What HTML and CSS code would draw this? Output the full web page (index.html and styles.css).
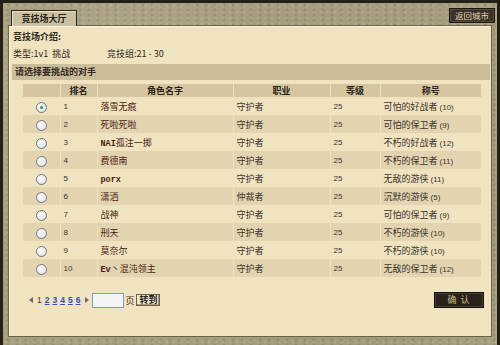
FILE: index.html
```html
<!DOCTYPE html>
<html lang="zh">
<head>
	<meta charset="utf-8">
	<title>竞技场大厅</title>
	<link rel="stylesheet" href="styles.css">
</head>
<body>
	<div class="frame">
		<div class="topbar">
			<div class="tab">竞技场大厅</div>
			<div class="back">返回城市</div>
		</div>
		<div class="panel">
			<p class="title">竞技场介绍:</p>
			<p class="info"><span class="type">类型:1v1 &nbsp;挑战</span><span>竞技组:21 - 30</span></p>
			<div class="bar">请选择要挑战的对手</div>
			<table class="list">
				<colgroup>
					<col class="c1"><col class="c2"><col class="c3"><col class="c4"><col class="c5"><col class="c6">
				</colgroup>
				<tr class="head"><th></th><th>排名</th><th>角色名字</th><th>职业</th><th>等级</th><th>称号</th></tr>
				<tr><td><span class="radio on"></span></td><td class="num">1</td><td class="name">落雪无痕</td><td>守护者</td><td class="num">25</td><td>可怕的好战者<span class="num cnt">(10)</span></td></tr>
				<tr class="alt"><td><span class="radio"></span></td><td class="num">2</td><td class="name">死啦死啦</td><td>守护者</td><td class="num">25</td><td>可怕的保卫者<span class="num cnt">(9)</span></td></tr>
				<tr><td><span class="radio"></span></td><td class="num">3</td><td class="name"><span class="mono">NAI</span>孤注一掷</td><td>守护者</td><td class="num">25</td><td>不朽的好战者<span class="num cnt">(12)</span></td></tr>
				<tr class="alt"><td><span class="radio"></span></td><td class="num">4</td><td class="name">费德南</td><td>守护者</td><td class="num">25</td><td>不朽的保卫者<span class="num cnt">(11)</span></td></tr>
				<tr><td><span class="radio"></span></td><td class="num">5</td><td class="name"><span class="mono">porx</span></td><td>守护者</td><td class="num">25</td><td>无敌的游侠<span class="num cnt">(11)</span></td></tr>
				<tr class="alt"><td><span class="radio"></span></td><td class="num">6</td><td class="name">潇洒</td><td>仲裁者</td><td class="num">25</td><td>沉默的游侠<span class="num cnt">(5)</span></td></tr>
				<tr><td><span class="radio"></span></td><td class="num">7</td><td class="name">战神</td><td>守护者</td><td class="num">25</td><td>可怕的保卫者<span class="num cnt">(9)</span></td></tr>
				<tr class="alt"><td><span class="radio"></span></td><td class="num">8</td><td class="name">刑天</td><td>守护者</td><td class="num">25</td><td>不朽的游侠<span class="num cnt">(10)</span></td></tr>
				<tr><td><span class="radio"></span></td><td class="num">9</td><td class="name">莫奈尔</td><td>守护者</td><td class="num">25</td><td>不朽的游侠<span class="num cnt">(10)</span></td></tr>
				<tr class="alt"><td><span class="radio"></span></td><td class="num">10</td><td class="name"><span class="mono">Ev</span>丶混沌领主</td><td>守护者</td><td class="num">25</td><td>无敌的保卫者<span class="num cnt">(12)</span></td></tr>
			</table>
			<div class="foot">
				<div class="pager">
					<span class="arrow left"></span>
					<span class="cur">1</span>
					<a href="#">2</a><a href="#">3</a><a href="#">4</a><a href="#">5</a><a href="#">6</a>
					<span class="arrow right"></span>
					<span class="box"></span>
					<span class="page">页</span>
					<span class="go">转到</span>
				</div>
				<div class="ok">确 认</div>
			</div>
		</div>
	</div>
</body>
</html>
```

FILE: styles.css
```css
html, body {
	margin: 0;
	padding: 0;
}

body {
	width: 500px;
	height: 345px;
	overflow: hidden;
	background-color: #251f16;
	font-family: "Noto Sans CJK SC", "Liberation Sans", sans-serif;
	font-size: 9px;
	color: #2e2a22;
}

.frame {
	margin: 3px 3px 0 3px;
	height: 342px;
	box-sizing: border-box;
	padding: 0 5px 8px 5px;
	background-color: #a59d7d;
	background-image:
		radial-gradient(circle at 20% 30%, rgba(255, 255, 240, .12) 0, transparent 40%),
		radial-gradient(circle at 70% 60%, rgba(60, 50, 30, .12) 0, transparent 45%),
		radial-gradient(circle at 3px 3px, rgba(255, 255, 235, .10) 0 1px, transparent 2px),
		radial-gradient(circle at 5px 2px, rgba(50, 40, 20, .12) 0 1px, transparent 2px);
	background-size: auto, auto, 7px 6px, 9px 5px;
}

.topbar {
	height: 22px;
	display: flex;
	justify-content: space-between;
	align-items: flex-start;
}

.tab {
	margin: 6px 0 0 3px;
	width: 64px;
	height: 15px;
	line-height: 15px;
	text-align: center;
	font-weight: bold;
	color: #2a2418;
	background-color: #c9c1a2;
	border: 1px solid #2e2618;
	border-bottom: none;
	box-shadow: inset 1px 1px 0 #ece3c6;
	position: relative;
	top: 1px;
	z-index: 1;
}

.back {
	margin: 5px -3px 0 0;
	width: 44px;
	height: 13px;
	line-height: 13px;
	text-align: center;
	font-size: 8.5px;
	color: #e0d2ae;
	background-color: #3a3128;
	border: 1px solid #1c1710;
	box-shadow: inset 0 0 0 1px #57493a;
}

.panel {
	height: 312px;
	box-sizing: border-box;
	background-color: #f0e3c0;
	border: 1px solid #6f644a;
	box-shadow: inset 1px 1px 0 #fbf3da;
	padding: 5px 1px 0 4px;
}

.title {
	margin: 0;
	height: 12px;
	line-height: 12px;
	font-weight: bold;
}

.info {
	margin: 5px 0 0 0;
	height: 12px;
	line-height: 12px;
}

.type {
	display: inline-block;
	width: 94px;
}

.bar {
	margin: 4px 0 0 -1px;
	height: 16px;
	line-height: 16px;
	padding-left: 3px;
	background-color: #cbbd9a;
	font-weight: bold;
}

.list {
	margin: 4px 0 0 10px;
	width: 458px;
	border-collapse: collapse;
	table-layout: fixed;
}

.c1 { width: 37px; }
.c2 { width: 37px; }
.c3 { width: 136px; }
.c4 { width: 97px; }
.c5 { width: 50px; }
.c6 { width: 101px; }

.list th {
	height: 13px;
	padding: 0;
	background-color: #d5c6a1;
	border-left: 1px solid #eee1bd;
	font-weight: bold;
	color: #2a2418;
}

.list th:first-child {
	border-left: none;
}

.list td {
	height: 18px;
	padding: 0 0 0 3px;
	border-left: 1px solid #efe2be;
	white-space: nowrap;
	color: #3a342a;
}

.list td:first-child {
	border-left: none;
	text-align: center;
	padding: 0;
}

.list tr.alt td {
	background-color: #e2d4b0;
}

.num {
	font-family: "Liberation Sans", sans-serif;
	font-size: 8px;
}

.cnt {
	margin-left: 2px;
}

.mono {
	font-family: "Liberation Mono", monospace;
	font-size: 8.5px;
	font-weight: bold;
}

.list td.name {
	color: #4d1c12;
}

.radio {
	display: inline-block;
	width: 9px;
	height: 9px;
	border-radius: 50%;
	border: 1px solid #6f7680;
	background: radial-gradient(circle at 40% 35%, #ffffff 0, #e4e6ea 70%, #c9ccd2 100%);
	vertical-align: middle;
	position: relative;
}

.radio.on::after {
	content: "";
	position: absolute;
	left: 3px;
	top: 3px;
	width: 3px;
	height: 3px;
	border-radius: 50%;
	background-color: #2c9a2c;
}

.foot {
	margin-top: 15px;
	display: flex;
	justify-content: space-between;
	align-items: center;
	padding: 0 6px 0 16px;
}

.pager {
	display: flex;
	align-items: center;
	height: 15px;
	font-family: "Liberation Sans", sans-serif;
	font-size: 8.5px;
}

.arrow {
	width: 0;
	height: 0;
	border-top: 3px solid transparent;
	border-bottom: 3px solid transparent;
}

.arrow.left {
	border-right: 4px solid #6a6a6a;
	margin-right: 4px;
}

.arrow.right {
	border-left: 4px solid #6a6a6a;
	margin-left: 2px;
}

.cur {
	margin-right: 3px;
	color: #3a342a;
}

.pager a {
	color: #2e4fb8;
	font-weight: bold;
	margin-right: 3px;
}

.box {
	margin-left: 3px;
	width: 30px;
	height: 13px;
	background-color: #f4f4f6;
	border: 1px solid #7f9db9;
}

.page {
	font-family: "Noto Sans CJK SC", sans-serif;
	font-size: 9px;
	color: #4d1c12;
	margin-left: 1px;
}

.go {
	margin-left: 2px;
	font-family: "Noto Sans CJK SC", sans-serif;
	font-size: 9px;
	font-weight: bold;
	line-height: 10px;
	padding: 0 2px;
	color: #2a2418;
	background-color: #efe8d4;
	border: 1px solid #6d6048;
	box-shadow: inset -1px -1px 0 #a99a7a;
}

.ok {
	width: 48px;
	height: 14px;
	line-height: 14px;
	text-align: center;
	color: #d2c08a;
	background-color: #2b221b;
	border: 1px solid #15110c;
	box-shadow: inset 0 0 0 1px #4a3d30;
	letter-spacing: 1px;
}
```
